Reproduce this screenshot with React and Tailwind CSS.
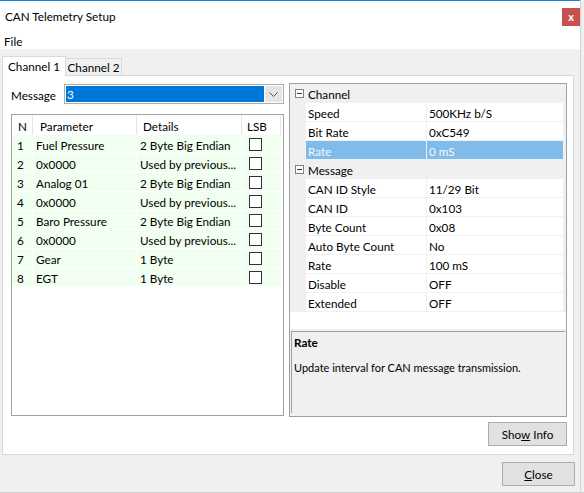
import React from 'react';

const params = [
  { n: 1, name: 'Fuel Pressure', details: '2 Byte Big Endian' },
  { n: 2, name: '0x0000', details: 'Used by previous...' },
  { n: 3, name: 'Analog 01', details: '2 Byte Big Endian' },
  { n: 4, name: '0x0000', details: 'Used by previous...' },
  { n: 5, name: 'Baro Pressure', details: '2 Byte Big Endian' },
  { n: 6, name: '0x0000', details: 'Used by previous...' },
  { n: 7, name: 'Gear', details: '1 Byte' },
  { n: 8, name: 'EGT', details: '1 Byte' },
];

const groups = [
  {
    title: 'Channel',
    rows: [
      ['Speed', '500KHz b/S'],
      ['Bit Rate', '0xC549'],
      ['Rate', '0 mS', true],
    ],
  },
  {
    title: 'Message',
    rows: [
      ['CAN ID Style', '11/29 Bit'],
      ['CAN ID', '0x103'],
      ['Byte Count', '0x08'],
      ['Auto Byte Count', 'No'],
      ['Rate', '100 mS'],
      ['Disable', 'OFF'],
      ['Extended', 'OFF'],
    ],
  },
];

function ParamGrid() {
  return (
    <div className="w-[273px] h-[302px] border border-[#a0a0a0] bg-white mt-[10px]">
      {/* Header */}
      <div className="flex h-[20px]">
        <div className="w-[21px] pl-[6px] pt-[3px] flex items-center border-r border-[#e5e5e5]">N</div>
        <div className="w-[104px] pl-[7px] pt-[3px] flex items-center border-r border-[#e5e5e5]">Parameter</div>
        <div className="w-[105px] pl-[6px] pt-[3px] flex items-center border-r border-[#e5e5e5]">Details</div>
        <div className="w-[39px] pl-[5px] pt-[3px] flex items-center border-r border-[#e5e5e5]">LSB</div>
      </div>
      {/* Rows */}
      {params.map((p) => (
        <div key={p.n} className="flex h-[19px] w-[269px] bg-[#f0fff0] border-b border-white">
          <div className="w-[21px] pl-[5px] pt-[3px] flex items-center border-r border-white">{p.n}</div>
          <div className="w-[104px] pl-[3px] pt-[3px] flex items-center border-r border-white whitespace-nowrap">{p.name}</div>
          <div className="w-[105px] pl-[3px] pt-[3px] flex items-center border-r border-white whitespace-nowrap overflow-hidden">{p.details}</div>
          <div className="w-[39px] pl-[7px] flex items-center">
            <div className="w-[13px] h-[13px] border border-[#333] bg-white" />
          </div>
        </div>
      ))}
    </div>
  );
}

function PropertyGrid() {
  return (
    <div className="w-[278px] h-[334px] border border-[#a0a0a0] bg-[#f0f0f0] flex flex-col">
      <div className="h-[245px] bg-white">
        {groups.map((g) => (
          <div key={g.title}>
            <div className="h-[19px] bg-[#f0f0f0] flex items-center">
              <div className="w-[9px] h-[9px] border border-[#808080] bg-white ml-[5px] mr-[4px] flex items-center justify-center">
                <div className="w-[5px] h-px bg-[#333]" />
              </div>
              <span className="pt-[3px]">{g.title}</span>
            </div>
            {g.rows.map(([label, value, sel]) => (
              <div key={label + value} className="flex h-[19px] border-b border-[#f0f0f0] bg-[#f0f0f0]">
                <div className="w-[16px]" />
                <div className={`w-[121px] pl-[2px] pt-[3px] flex items-center border-r border-[#f0f0f0] ${sel ? 'bg-[#80bbea] text-[#f4f8fc]' : 'bg-white'}`}>{label}</div>
                <div className={`w-[136px] pl-[2px] pt-[3px] flex items-center ${sel ? 'bg-[#80bbea] text-[#f4f8fc]' : 'bg-white'}`}>{value}</div>
              </div>
            ))}
          </div>
        ))}
      </div>
      <div className="mt-[2px] mx-[1px] h-[82px] w-[274px] border-t border-l border-[#a0a0a0] bg-[#f0f0f0] pl-[2px] pt-[5px]">
        <div className="font-bold">Rate</div>
        <div className="mt-[13px] text-[11px]">Update interval for CAN message transmission.</div>
      </div>
    </div>
  );
}

export default function App() {
  return (
    <div className="w-[584px] h-[493px] bg-[#f0f0f0] text-[11.7px] text-black font-['Lato',sans-serif] overflow-hidden leading-none">
      <div className="w-[581px] h-[492px] border-r border-[#d4d4d4] flex flex-col bg-[#f0f0f0]">
        <div className="h-px bg-[#1883d7]" />
        {/* Title bar */}
        <div className="h-[31px] bg-white flex items-start justify-between pl-[5px]">
          <span className="mt-[10px]">CAN Telemetry Setup</span>
          <div className="mt-[7px] w-[18px] h-[18px] bg-[#c75050] text-white text-[11px] font-bold flex items-center justify-center pb-[2px]">x</div>
        </div>
        {/* Menu */}
        <div className="h-[17px] bg-white pl-[4px] pt-[2px] flex items-center">File</div>

        {/* Tabs */}
        <div className="flex items-end h-[26px] pl-[2px] whitespace-nowrap">
          <div className="w-[64px] h-[20px] bg-white border border-b-0 border-[#d9d9d9] flex items-center justify-center relative z-10 -mb-px">Channel 1</div>
          <div className="w-[56px] h-[17px] bg-[#f0f0f0] border border-l-0 border-b-0 border-[#d9d9d9] flex items-center justify-center pt-[2px]">Channel 2</div>
        </div>
        <div className="ml-[2px] w-[572px] h-[380px] border border-[#d9d9d9] bg-white flex flex-col">
          <div className="flex pt-[7px] pl-[8px]">
            <div className="flex flex-col">
              <div className="flex items-center h-[20px] mt-px">
                <span className="w-[53px] pt-[3px]">Message</span>
                <div className="w-[220px] h-[20px] border border-[#adadad] bg-white p-px flex">
                  <div className="flex-1 bg-[#0078d7] text-white pl-[1px] pt-[2px] flex items-center">3</div>
                  <div className="w-[17px] bg-[#e5e5e5] ml-px flex items-center justify-center">
                    <svg width="9" height="5" viewBox="0 0 9 5">
                      <path d="M0.5 0.5 L4.5 4.5 L8.5 0.5" fill="none" stroke="#555" strokeWidth="1" />
                    </svg>
                  </div>
                </div>
              </div>
              <ParamGrid />
            </div>
            <div className="ml-[5px]">
              <PropertyGrid />
            </div>
          </div>
          <div className="flex justify-end pr-[6px] mt-[5px]">
            <button className="w-[79px] h-[24px] bg-[#e1e1e1] border border-[#adadad] flex items-center justify-center pt-[2px]">
              Sho<span className="underline">w</span>&nbsp;Info
            </button>
          </div>
        </div>
        <div className="flex justify-end pr-[5px] mt-[7px]">
          <button className="w-[73px] h-[24px] bg-[#e1e1e1] border border-[#adadad] flex items-center justify-center pt-[2px]">
            <span className="underline">C</span>lose
          </button>
        </div>
      </div>
      <div className="h-px bg-[#cfcfcf]" />
    </div>
  );
}
